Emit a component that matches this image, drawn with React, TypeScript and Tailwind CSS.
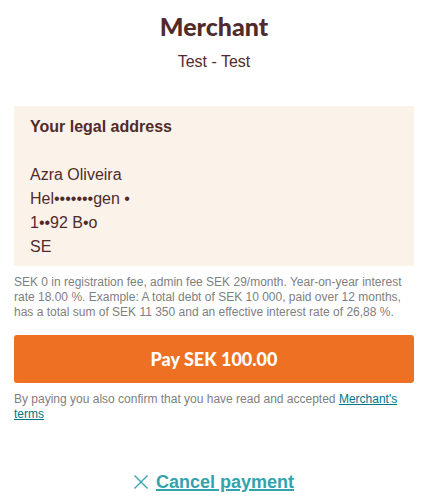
export default function App() {
  return (
    <main className="flex flex-col bg-white pr-[11px] pl-[14px] font-['Liberation_Sans',Arial,sans-serif] text-[#512b2b]">
      <header className="pt-[10px] text-center">
        <h1 className="font-['Lato',sans-serif] text-[25px] leading-8 font-black">Merchant</h1>
        <p className="mt-2 text-base leading-6">Test - Test</p>
      </header>
      <section className="mt-8 bg-[#fbf2ea] px-4 pt-[9px] pb-[7px] text-base leading-6">
        <h2 className="font-bold">Your legal address</h2>
        <address className="mt-6 not-italic">
          <p>Azra Oliveira</p>
          <p>Hel•••••••gen •</p>
          <p>1••92 B•o</p>
          <p>SE</p>
        </address>
      </section>
      <p className="mt-[9px] text-xs leading-[15px] text-[#808080]">
        SEK 0 in registration fee, admin fee SEK 29/month. Year-on-year interest rate 18.00 %. Example: A total debt of SEK 10 000, paid over 12 months, has a total sum of SEK 11 350 and an effective interest rate of 26,88 %.
      </p>
      <button type="button" className="mt-[15px] h-12 w-full rounded-[3px] bg-[#ee7023] font-['Lato',sans-serif] text-lg font-black text-white">
        Pay SEK 100.00
      </button>
      <p className="mt-[9px] text-xs leading-[15px] text-[#808080]">
        By paying you also confirm that you have read and accepted{" "}
        <a href="#terms" className="text-[#007788] underline">Merchant's terms</a>
      </p>
      <footer className="mt-12 flex items-center justify-center gap-2 text-[#31a3ae]">
        <svg viewBox="0 0 14 14" className="size-[14px]" fill="none" stroke="currentColor" strokeWidth="1.3" aria-hidden="true">
          <path d="M.5 .5 13.5 13.5M13.5 .5 .5 13.5" />
        </svg>
        <a href="#cancel" className="text-lg leading-6 font-bold underline decoration-2">Cancel payment</a>
      </footer>
    </main>
  );
}
